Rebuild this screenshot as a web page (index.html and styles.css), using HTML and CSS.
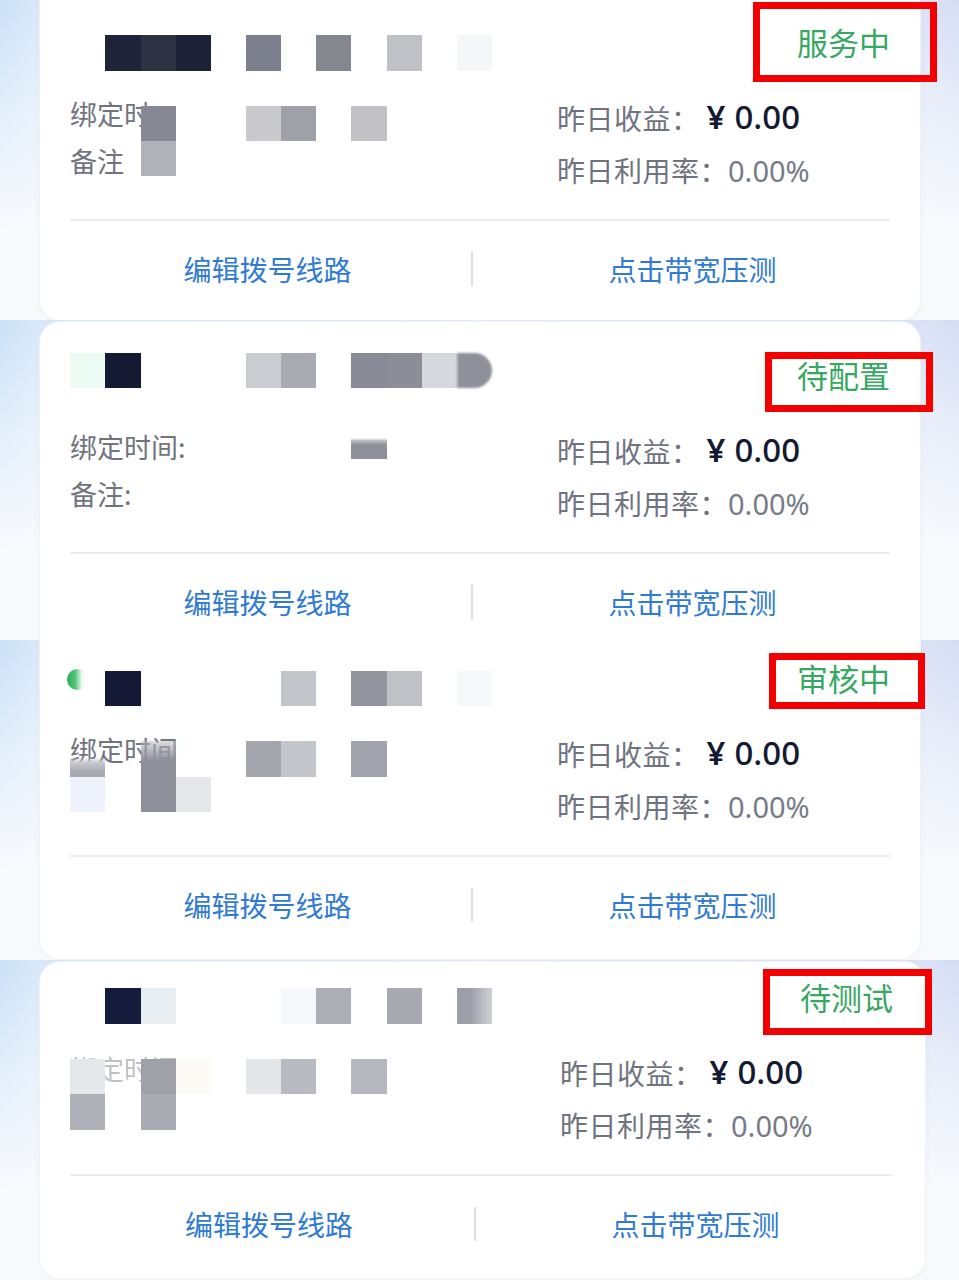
FILE: index.html
```html
<!DOCTYPE html>
<html lang="zh-CN">
<head>
<meta charset="utf-8">
<title>线路列表</title>
<link rel="stylesheet" href="styles.css">
</head>
<body>
<main class="collage">
  <section class="shot shot--1">
    <article class="card">
      <header class="card-head">
        <div class="card-title"></div>
        <span class="status">服务中<i class="mark"></i></span>
      </header>
      <div class="card-info">
        <div class="meta">
          <p>绑定时</p>
          <p>备注</p>
        </div>
        <div class="stats">
          <p><span class="k">昨日收益：</span><span class="money"><span class="yen">¥</span>0.00</span></p>
          <p><span class="k">昨日利用率：</span><span class="pct">0.00%</span></p>
        </div>
      </div>
      <div class="card-actions">
        <a class="act">编辑拨号线路</a>
        <span class="sep"></span>
        <a class="act act--right">点击带宽压测</a>
      </div>
    </article>
  </section>

  <section class="shot shot--2">
    <article class="card">
      <header class="card-head">
        <div class="card-title"></div>
        <span class="status">待配置<i class="mark"></i></span>
      </header>
      <div class="card-info">
        <div class="meta">
          <p>绑定时间:</p>
          <p>备注:</p>
        </div>
        <div class="stats">
          <p><span class="k">昨日收益：</span><span class="money"><span class="yen">¥</span>0.00</span></p>
          <p><span class="k">昨日利用率：</span><span class="pct">0.00%</span></p>
        </div>
      </div>
      <div class="card-actions">
        <a class="act">编辑拨号线路</a>
        <span class="sep"></span>
        <a class="act act--right">点击带宽压测</a>
      </div>
    </article>
  </section>

  <section class="shot shot--3">
    <article class="card">
      <header class="card-head">
        <div class="card-title"><span class="dot"></span></div>
        <span class="status">审核中<i class="mark"></i></span>
      </header>
      <div class="card-info">
        <div class="meta">
          <p>绑定时间</p>
          <p></p>
        </div>
        <div class="stats">
          <p><span class="k">昨日收益：</span><span class="money"><span class="yen">¥</span>0.00</span></p>
          <p><span class="k">昨日利用率：</span><span class="pct">0.00%</span></p>
        </div>
      </div>
      <div class="card-actions">
        <a class="act">编辑拨号线路</a>
        <span class="sep"></span>
        <a class="act act--right">点击带宽压测</a>
      </div>
    </article>
  </section>

  <section class="shot shot--4">
    <article class="card">
      <header class="card-head">
        <div class="card-title"></div>
        <span class="status">待测试<i class="mark"></i></span>
      </header>
      <div class="card-info">
        <div class="meta meta--faint">
          <p>绑定时间</p>
          <p></p>
        </div>
        <div class="stats">
          <p><span class="k">昨日收益：</span><span class="money"><span class="yen">¥</span>0.00</span></p>
          <p><span class="k">昨日利用率：</span><span class="pct">0.00%</span></p>
        </div>
      </div>
      <div class="card-actions">
        <a class="act">编辑拨号线路</a>
        <span class="sep"></span>
        <a class="act act--right">点击带宽压测</a>
      </div>
    </article>
  </section>

  <div class="mosaic" aria-hidden="true">
    <i style="grid-area:2/4;--c:#1f2438"></i>
    <i style="grid-area:2/5;--c:#2e3245"></i>
    <i style="grid-area:2/6;--c:#1d2236"></i>
    <i style="grid-area:2/8;--c:#7c7f8e"></i>
    <i style="grid-area:2/10;--c:#85878f"></i>
    <i style="grid-area:2/12;--c:#c0c1c6"></i>
    <i style="grid-area:2/14;--c:#f5f6f8"></i>
    <i style="grid-area:4/5;--c:#878893"></i>
    <i style="grid-area:4/8;--c:#c9c9ce"></i>
    <i style="grid-area:4/9;--c:#9fa0a8"></i>
    <i style="grid-area:4/11;--c:#c1c1c6"></i>
    <i style="grid-area:5/5;--c:#b1b2b9"></i>

    <i style="grid-area:11/3;--c:#edfbf5"></i>
    <i style="grid-area:11/4;--c:#151a33"></i>
    <i style="grid-area:11/8;--c:#cbccd1"></i>
    <i style="grid-area:11/9;--c:#a9aab2"></i>
    <i style="grid-area:11/11;--c:#898a95"></i>
    <i style="grid-area:11/12;--c:#8c8d97"></i>
    <i style="grid-area:11/13;--c:#d6d8de"></i>
    <i class="round-r" style="grid-area:11/14;--c:#8f909a"></i>
    <i style="grid-area:13/11;--c:linear-gradient(180deg,rgba(255,255,255,0) 40%,#b9bac1 48%,#8e8f99 60%)"></i>

    <i style="grid-area:20/4;--c:#141a36"></i>
    <i style="grid-area:20/9;--c:#c4c5cb"></i>
    <i style="grid-area:20/11;--c:#93949d"></i>
    <i style="grid-area:20/12;--c:#c0c1c6"></i>
    <i style="grid-area:20/14;--c:#f7f8fa"></i>
    <i style="grid-area:22/3;--c:linear-gradient(180deg,rgba(255,255,255,0) 45%,#c9cad0 60%,#a9aab1 85%)"></i>
    <i style="grid-area:22/5;--c:linear-gradient(180deg,rgba(190,191,198,0.5) 0%,#8e8f99 55%)"></i>
    <i style="grid-area:22/8;--c:#a4a5ad"></i>
    <i style="grid-area:22/9;--c:#c5c6cb"></i>
    <i style="grid-area:22/11;--c:#a1a2ab"></i>
    <i style="grid-area:23/3;--c:#eff3fb"></i>
    <i style="grid-area:23/5;--c:#8f909a"></i>
    <i style="grid-area:23/6;--c:#e6e7ea"></i>

    <i style="grid-area:29/4;--c:#141b3c"></i>
    <i style="grid-area:29/5;--c:#e8edf1"></i>
    <i style="grid-area:29/9;--c:#f6f8fb"></i>
    <i style="grid-area:29/10;--c:#adaeb6"></i>
    <i style="grid-area:29/12;--c:#a8a9b1"></i>
    <i style="grid-area:29/14;--c:linear-gradient(90deg,#9d9ea7 40%,#d2d3d8)"></i>
    <i style="grid-area:31/3;--c:#e6e7eb"></i>
    <i style="grid-area:31/5;--c:#9fa0a8"></i>
    <i style="grid-area:31/6;--c:#fbfaf4"></i>
    <i style="grid-area:31/8;--c:#e5e6e9"></i>
    <i style="grid-area:31/9;--c:#babbc2"></i>
    <i style="grid-area:31/11;--c:#b7b8bf"></i>
    <i style="grid-area:32/3;--c:#afb0b8"></i>
    <i style="grid-area:32/5;--c:#a9aab2"></i>
  </div>
</main>
</body>
</html>
```

FILE: styles.css
```css
* { box-sizing: border-box; }

html, body {
  margin: 0;
  padding: 0;
  background: #f8fafd;
}

body {
  font-family: "Noto Sans", "Noto Sans CJK SC", sans-serif;
}

p { margin: 0; }

.collage {
  position: relative;
  width: 959px;
  height: 1280px;
  overflow: hidden;
}

/* ---------- one cropped screenshot strip ---------- */
.shot {
  --pad-top: 0px;
  --pad-bottom: 6px;
  --info-col: 487px;
  --act-col: 395px;
  height: 320px;
  overflow: hidden;
  padding: 0 39px 0 40px;
  background:
    linear-gradient(180deg, rgba(248,250,253,0) 0%, rgba(248,250,253,0.55) 35%, #f8fafd 72%),
    linear-gradient(90deg, #c9e0f8 0%, #d9e8f9 4%, #e9eef9 50%, #dce3f6 95%, #d4ddf4 100%);
}

.card {
  background: #fff;
  border-radius: 20px;
  box-shadow: 0 0 0 1px #eef1f5, 0 2px 8px rgba(40, 60, 100, 0.04);
  padding: var(--pad-top) 30px var(--pad-bottom) 30px;
}

.shot--1 .card { margin-top: -20px; --pad-top: 27px; --pad-bottom: 3px; }
.shot--2 .card { margin-top: 2px; --pad-top: 18px; }
.shot--3 .card { margin-top: -20px; --pad-top: 23px; }
.shot--4 { padding-right: 34px; }
.shot--4 .card { margin-top: 2px; padding-right: 32px; --info-col: 490px; --act-col: 398px; }

/* header */
.card-head {
  height: 70px;
  display: flex;
  align-items: center;
  justify-content: space-between;
}

.card-title {
  display: flex;
  align-items: center;
}

.dot {
  width: 21px;
  height: 21px;
  margin-left: -3px;
  margin-top: 2px;
  border-radius: 50%;
  background: linear-gradient(90deg, #27ad55 0%, #55c67a 40%, rgba(200,240,210,0.4) 70%, rgba(255,255,255,0) 85%);
}

.status {
  position: relative;
  display: inline-block;
  font-family: "Noto Sans CJK SC", sans-serif;
  font-size: 31px;
  line-height: 40px;
  color: #36a862;
}

.mark {
  position: absolute;
  border: 7px solid #f50000;
  pointer-events: none;
}

.shot--1 .mark { left: -44px; right: -47px; top: -20px; bottom: -20px; }
.shot--2 .mark { left: -32px; right: -43px; top: -3px; bottom: -17px; }
.shot--3 .mark { left: -28px; right: -35px; top: -5px; bottom: -11px; }
.shot--4 .mark { left: -37px; right: -39px; top: -8px; bottom: -18px; }

/* info */
.card-info {
  display: grid;
  grid-template-columns: var(--info-col) 1fr;
  align-items: start;
  padding-bottom: 23px;
  border-bottom: 2px solid #ebecef;
}

.meta {
  padding-top: 13px;
  font-family: "Noto Sans CJK SC", sans-serif;
  font-size: 27px;
  color: #70747f;
}

.meta p {
  height: 47px;
  line-height: 47px;
}

.meta--faint { opacity: 0.45; }

.stats {
  padding-top: 15px;
}

.stats p {
  height: 52px;
  display: flex;
  align-items: center;
  white-space: nowrap;
}

.k {
  font-family: "Noto Sans CJK SC", sans-serif;
  font-size: 28px;
  letter-spacing: 0.5px;
  color: #6f7380;
}

.money {
  margin-left: 7px;
  margin-top: -3px;
  font-family: "Noto Sans", sans-serif;
  font-size: 33px;
  font-weight: 500;
  color: #141a33;
}

.yen { margin-right: 9px; font-weight: 600; }

.pct {
  font-family: "Noto Sans", sans-serif;
  font-size: 29px;
  color: #777b87;
}

/* actions */
.card-actions {
  height: 96px;
  display: grid;
  grid-template-columns: var(--act-col) 2px 1fr;
  column-gap: 6px;
  align-items: center;
}

.act {
  text-align: center;
  font-family: "Noto Sans CJK SC", sans-serif;
  font-size: 28px;
  color: #2f7bd3;
  white-space: nowrap;
}

.act--right { padding-left: 16px; }

.sep {
  width: 2px;
  height: 34px;
  background: #dcdee3;
}

/* redaction mosaic over the whole collage */
.mosaic {
  position: absolute;
  inset: 0;
  display: grid;
  grid-template-columns: repeat(28, 35.15px);
  grid-template-rows: repeat(37, 35.3px);
  pointer-events: none;
}

.mosaic i {
  display: block;
  background: var(--c);
}

.mosaic .round-r {
  border-radius: 0 50% 50% 0 / 0 50% 50% 0;
  filter: blur(1px);
}
```
